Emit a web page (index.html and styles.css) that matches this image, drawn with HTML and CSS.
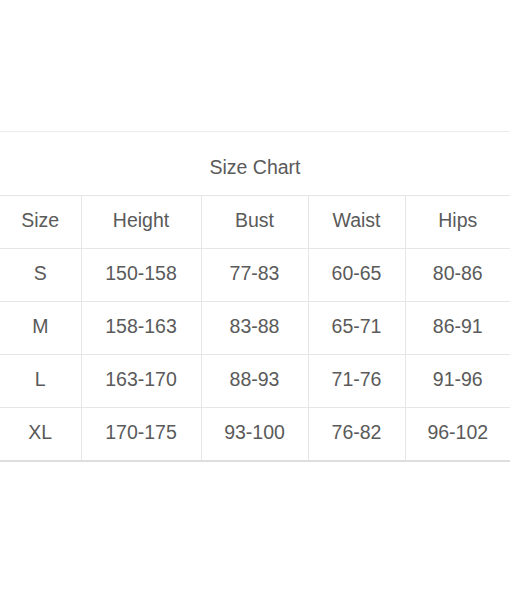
FILE: index.html
```html
<!DOCTYPE html>
<html>
<head>
<meta charset="utf-8">
<link rel="stylesheet" href="styles.css">
</head>
<body>
<div class="page">
  <table class="chart">
    <colgroup>
      <col class="c1"><col class="c2"><col class="c3"><col class="c4"><col class="c5">
    </colgroup>
    <thead>
      <tr class="title-row"><th colspan="5">Size Chart</th></tr>
      <tr class="head-row"><td>Size</td><td>Height</td><td>Bust</td><td>Waist</td><td>Hips</td></tr>
    </thead>
    <tbody>
      <tr><td>S</td><td>150-158</td><td>77-83</td><td>60-65</td><td>80-86</td></tr>
      <tr><td>M</td><td>158-163</td><td>83-88</td><td>65-71</td><td>86-91</td></tr>
      <tr><td>L</td><td>163-170</td><td>88-93</td><td>71-76</td><td>91-96</td></tr>
      <tr class="last"><td>XL</td><td>170-175</td><td>93-100</td><td>76-82</td><td>96-102</td></tr>
    </tbody>
  </table>
</div>
</body>
</html>
```

FILE: styles.css
```css
html, body {
  margin: 0;
  padding: 0;
  background: #ffffff;
  overflow: hidden;
}
.page {
  padding-top: 131px;
  width: 510px;
}
.chart {
  width: 510px;
  border-collapse: collapse;
  table-layout: fixed;
  font-family: "Liberation Sans", Arial, sans-serif;
  font-size: 19.5px;
  color: #5a5a5a;
}
.c1 { width: 81px; }
.c2 { width: 120px; }
.c3 { width: 107px; }
.c4 { width: 97px; }
.c5 { width: 105px; }
.chart th {
  font-weight: normal;
  height: 55px;
  padding: 8px 0 0 0;
  text-align: center;
  vertical-align: middle;
  border-top: 1px solid #ececec;
  border-bottom: 1px solid #e6e6e6;
}
.chart td {
  height: 48px;
  padding: 0 0 4px 0;
  text-align: center;
  vertical-align: middle;
  border-bottom: 1px solid #e6e6e6;
  border-left: 1px solid #e6e6e6;
}
.chart td:first-child {
  border-left: none;
}
.chart tr.last td {
  border-bottom: 2px solid #dedede;
}
```
